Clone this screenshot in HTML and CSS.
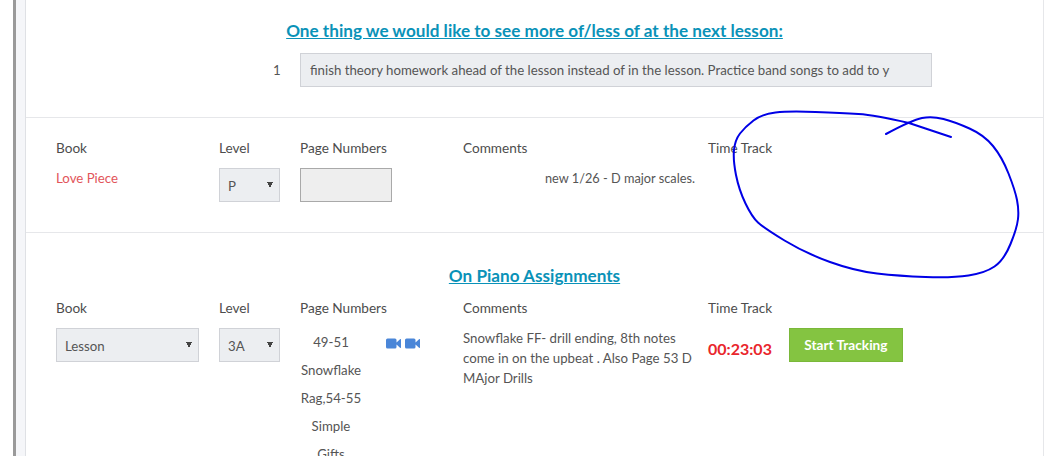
FILE: index.html
```html
<!DOCTYPE html>
<html lang="en">
<head>
<meta charset="utf-8">
<title>Lesson</title>
<link rel="stylesheet" href="styles.css">
</head>
<body>
<div class="shell">
  <main class="panel">
    <section class="feedback">
      <h2 class="title">One thing we would like to see more of/less of at the next lesson:</h2>
      <div class="feedback-row">
        <span class="num">1</span>
        <input class="field wide" type="text" value="finish theory homework ahead of the lesson instead of in the lesson. Practice band songs to add to y">
      </div>
    </section>
    <section class="piece">
      <div class="grid heads">
        <div>Book</div><div>Level</div><div>Page Numbers</div><div>Comments</div><div>Time Track</div>
      </div>
      <div class="grid">
        <div class="love">Love Piece</div>
        <div><select class="field picker sel-level"><option>P</option></select></div>
        <div><input class="field pages" type="text"></div>
        <div class="note">new 1/26 - D major scales.</div>
        <div></div>
      </div>
    </section>
    <section class="assign">
      <h2 class="title">On Piano Assignments</h2>
      <div class="grid heads">
        <div>Book</div><div>Level</div><div>Page Numbers</div><div>Comments</div><div>Time Track</div>
      </div>
      <div class="grid">
        <div><select class="field picker sel-book"><option>Lesson</option></select></div>
        <div><select class="field picker sel-level"><option>3A</option></select></div>
        <div class="page-cell">
          <div class="page-list">49-51 Snowflake Rag,54-55 Simple Gifts</div>
          <div class="cams">
            <svg class="cam" viewBox="0 0 15 11"><path d="M1.5 .5h7.5a1.5 1.5 0 0 1 1.5 1.5v2.4L14 1.2a.6.6 0 0 1 1 .4v7.8a.6.6 0 0 1-1 .4l-3.500-3.200V9a1.500 1.500 0 0 1-1.500 1.500H1.500A1.500 1.500 0 0 1 0 9V2a1.500 1.500 0 0 1 1.500-1.500z"/></svg>
            <svg class="cam" viewBox="0 0 15 11"><path d="M1.5 .5h7.5a1.5 1.5 0 0 1 1.5 1.5v2.4L14 1.2a.6.6 0 0 1 1 .4v7.8a.6.6 0 0 1-1 .4l-3.500-3.200V9a1.500 1.500 0 0 1-1.500 1.500H1.500A1.500 1.500 0 0 1 0 9V2a1.500 1.500 0 0 1 1.500-1.500z"/></svg>
          </div>
        </div>
        <div class="comment">Snowflake FF- drill ending, 8th notes come in on the upbeat . Also Page 53 D MAjor Drills</div>
        <div class="track">
          <span class="timer">00:23:03</span>
          <button class="start" type="button">Start Tracking</button>
        </div>
      </div>
    </section>
  </main>
</div>
<svg class="scribble" width="1044" height="456" viewBox="0 0 1044 456">
  <path d="M951 137 L909 123 Q875 115 858.5 114 Q842 113 815.5 112 Q789 111 775.5 112.5 Q762 114 753.5 120.5 Q745 127 740 133.5 Q735 140 734 150 Q733 160 736 175 Q739 190 745.5 203.5 Q752 217 758 222.5 Q764 228 784.5 240.5 Q805 253 830 262 Q855 271 877 273.5 Q899 276 925.5 277 Q952 278 968.5 275.5 Q985 273 994.5 266.5 Q1004 260 1010.5 244 Q1017 228 1018 219 Q1019 210 1017 200 Q1015 190 1008.5 173.5 Q1002 157 993 146 Q984 135 969.5 128.5 Q955 122 943.5 119 Q932 116 922 118 Q912 120 886 134"/>
</svg>
</body>
</html>
```
FILE: styles.css
```css
html, body {
  margin: 0;
  height: 456px;
  overflow: hidden;
  background: #fff;
}
body {
  position: relative;
  font-family: "Lato", "Liberation Sans", sans-serif;
  font-size: 13.25px;
  color: #555;
}
.shell {
  margin-left: 13px;
  height: 456px;
  border-left: 3px solid #9a9a9a;
  background: #f5f6f9;
  padding-left: 9px;
}
.panel {
  height: 456px;
  box-sizing: border-box;
  background: #fff;
  border-left: 1px solid #dfe1e5;
  border-right: 1px solid #e6e7ea;
  overflow: hidden;
}
.title {
  margin: 0;
  text-align: center;
  font-size: 17.15px;
  line-height: 24px;
  font-weight: 700;
  color: #0a92b8;
  text-decoration: underline;
}
.feedback {
  height: 118px;
  box-sizing: border-box;
  padding: 19px 0 0 0;
  border-bottom: 1px solid #e6e7ea;
}
.feedback-row {
  display: flex;
  align-items: center;
  margin-top: 10px;
  padding-left: 247px;
}
.num {
  width: 27px;
}
.field {
  box-sizing: border-box;
  height: 34px;
  background-color: #eceef1;
  border: 1px solid #d0d2d7;
  border-radius: 0;
  color: #555;
  font: inherit;
  outline: none;
}
.wide {
  width: 632px;
  padding: 0 9px;
}
.picker {
  appearance: none;
  -webkit-appearance: none;
  padding: 2px 0 0 8px;
  background-image:
    linear-gradient(to bottom left, #444 50%, transparent 50%),
    linear-gradient(to bottom right, #444 50%, transparent 50%);
  background-size: 3px 6px, 3px 6px;
  background-repeat: no-repeat;
  background-position: right 9px top 13px, right 6px top 13px;
}
.grid {
  display: grid;
  grid-template-columns: 163px 81px 163px 245px 1fr;
  padding-left: 30px;
}
.heads {
  font-size: 13.6px;
  color: #4d4d4d;
  line-height: 20px;
  margin-bottom: 10px;
}
.piece {
  height: 115px;
  box-sizing: border-box;
  padding-top: 20px;
  border-bottom: 1px solid #e6e7ea;
}
.love {
  color: #e2555a;
  line-height: 20px;
}
.sel-level {
  width: 61px;
}
.sel-book {
  width: 143px;
}
.pages {
  width: 92px;
  background-color: #eee;
  border-color: #a9a9a9;
}
.note {
  padding-left: 82px;
  font-size: 12.75px;
  line-height: 20px;
}
.assign {
  padding-top: 31px;
}
.assign .title {
  margin-bottom: 10px;
}
.page-cell {
  display: flex;
  align-items: flex-start;
}
.page-list {
  width: 62px;
  text-align: center;
  line-height: 28px;
}
.cams {
  display: flex;
  gap: 4px;
  margin: 10px 0 0 24px;
}
.cam {
  width: 15px;
  height: 11px;
  fill: #4a86d8;
}
.comment {
  width: 232px;
  line-height: 20px;
}
.track {
  display: flex;
  align-items: flex-start;
  gap: 17px;
}
.timer {
  margin-top: 10px;
  font-size: 16px;
  line-height: 22px;
  font-weight: 700;
  color: #e9262c;
}
.start {
  width: 114px;
  height: 34px;
  border: 1px solid #7ab83a;
  background: #84c441;
  color: #fff;
  font: inherit;
  font-size: 13.65px;
  font-weight: 700;
}
.scribble {
  position: absolute;
  left: 0;
  top: 0;
  pointer-events: none;
  fill: none;
  stroke: #0000e6;
  stroke-width: 2;
  stroke-linecap: round;
  stroke-linejoin: round;
}
```
